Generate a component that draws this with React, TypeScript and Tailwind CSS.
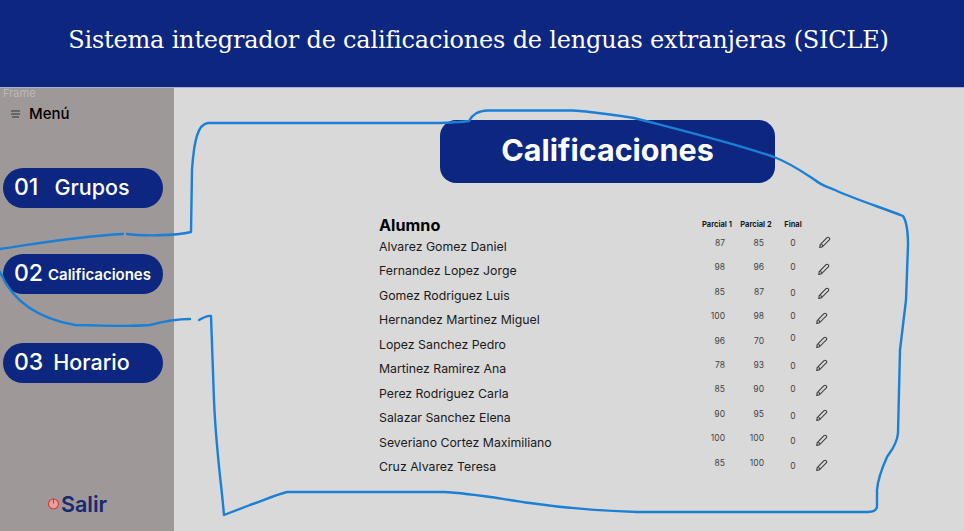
const rows = [
  { name: "Alvarez Gomez Daniel", p1: "87", p2: "85", fOff: 8, penX: 14, penOff: 10 },
  { name: "Fernandez Lopez Jorge", p1: "98", p2: "96", fOff: 8, penX: 13, penOff: 6 },
  { name: "Gomez Rodriguez Luis", p1: "85", p2: "87", fOff: 6, penX: 13, penOff: 6 },
  { name: "Hernandez Martinez Miguel", p1: "100", p2: "98", fOff: 8, penX: 11, penOff: 6 },
  { name: "Lopez Sanchez Pedro", p1: "96", p2: "70", fOff: 14, penX: 11, penOff: 6 },
  { name: "Martinez Ramirez Ana", p1: "78", p2: "93", fOff: 6, penX: 11, penOff: 8 },
  { name: "Perez Rodriguez Carla", p1: "85", p2: "90", fOff: 8, penX: 11, penOff: 8 },
  { name: "Salazar Sanchez Elena", p1: "90", p2: "95", fOff: 4, penX: 11, penOff: 6 },
  { name: "Severiano Cortez Maximiliano", p1: "100", p2: "100", fOff: 2, penX: 11, penOff: 6 },
  { name: "Cruz Alvarez Teresa", p1: "85", p2: "100", fOff: 2, penX: 11, penOff: 4 },
];

function Pen() {
  return (
    <svg width="12" height="12" viewBox="0 0 12 12" fill="none" stroke="#3d3d3d" strokeWidth="1.1">
      <path d="M1.2 8.6 8 1.6a1.4 1.4 0 0 1 2 0l.3.3a1.4 1.4 0 0 1 0 2L3.4 10.8l-2.6.7z" />
      <path d="M2.6 8.2l1.2 1.6" />
    </svg>
  );
}

function NavPill({ num, label, small, gap }: { num: string; label: string; small?: boolean; gap: string }) {
  return (
    <div className="ml-[3px] flex h-10 w-[160px] items-center rounded-[20px] bg-[#0d2680] pl-[11px] text-white">
      <span className="text-[23px] leading-none font-medium">{num}</span>
      <span className={small ? "ml-[5px] pt-[3px] text-[15px] font-semibold" : gap + " text-[21.5px] font-medium"}>{label}</span>
    </div>
  );
}

export default function App() {
  return (
    <div className="relative flex h-[531px] w-[964px] flex-col overflow-hidden bg-[#d9d9d9] font-['Inter',sans-serif]">
      <header className="flex h-[88px] shrink-0 items-start justify-center border-b border-[#aab2d8] bg-[#0d2680] pt-[22px] pr-[7px] font-['DejaVu_Serif',serif] text-[24px] text-white">
        <span className="tracking-[-0.2px]">Sistema integrador de calificaciones de lenguas extranjeras (SICLE)</span>
      </header>
      <div className="flex min-h-0 flex-1">
        <aside className="relative flex w-[174px] shrink-0 flex-col bg-[#9e9898]">
          <span className="absolute top-[-3px] left-[3px] text-[11px] text-[#bdb8b8]">Frame</span>
          <div className="mt-[15px] ml-[11px] flex items-center gap-[8px] text-black">
            <svg width="10" height="8" viewBox="0 0 10 8" stroke="#333" strokeWidth="1"><path d="M0 1h9M0 4h9M1 7h7" /></svg>
            <span className="text-[15px] font-medium">Menú</span>
          </div>
          <div className="mt-[42px] flex flex-col">
            <NavPill num="01" label="Grupos" gap="ml-[16px]" />
            <div className="h-[46px]" />
            <NavPill num="02" label="Calificaciones" small gap="" />
            <div className="h-[49px]" />
            <NavPill num="03" label="Horario" gap="ml-[10px]" />
          </div>
          <div className="mt-auto mb-[11px] ml-[47px] flex items-center text-[#18296f]">
            <svg width="13" height="13" viewBox="0 0 12 12" fill="#e8a09a" stroke="#d8362e" strokeWidth="1"><circle cx="6" cy="6.4" r="4.6" /><path d="M6 1v5" /></svg>
            <span className="ml-[1px] text-[21.5px] font-semibold">Salir</span>
          </div>
        </aside>
        <main className="flex flex-1 flex-col items-start">
          <div className="mt-[32px] ml-[266px] flex h-[63px] w-[335px] items-center justify-center rounded-[16px] bg-[#0d2680] pb-[3px] text-[30.5px] font-bold text-white">
            Calificaciones
          </div>
          <div className="mt-[32px] ml-[205px] w-[470px] text-[12.3px] text-[#1a1a1a]">
            <div className="flex h-[20px] items-center">
              <span className="w-[322px] text-[16.2px] font-bold text-black">Alumno</span>
              <span className="w-[32px] text-center text-[7.5px] font-bold whitespace-nowrap">Parcial 1</span>
              <span className="ml-[7px] w-[32px] text-center text-[7.5px] font-bold whitespace-nowrap">Parcial 2</span>
              <span className="ml-[9px] w-[24px] text-center text-[7.5px] font-bold">Final</span>
            </div>
            {rows.map((r) => (
              <div key={r.name} className="flex h-[24.45px] items-center">
                <span className="w-[322px]">{r.name}</span>
                <span className="mb-[8px] w-[24px] text-right text-[8.5px] text-[#444]">{r.p1}</span>
                <span className="mb-[8px] ml-[15px] w-[24px] text-right text-[8.5px] text-[#444]">{r.p2}</span>
                <span className="ml-[17px] w-[24px] text-center text-[8.5px] text-[#444]" style={{ marginBottom: r.fOff }}>0</span>
                <span style={{ marginLeft: r.penX, marginBottom: r.penOff }}><Pen /></span>
              </div>
            ))}
          </div>
        </main>
      </div>
      <svg className="pointer-events-none absolute top-0 left-0" width="964" height="531" fill="none" stroke="#1b7fd6" strokeWidth="2.4" strokeLinecap="round" strokeLinejoin="round">
        <path d="M0 249 C40 243 80 236 123 234" />
        <path d="M127 234 C140 236 175 236 191 232 L192 170 C194 140 198 124 208 123 L440 123 C455 122 465 122 469 121 C473 114 478 111 488 110.5 L573 110.5 C595 112 615 115 634 118 C680 130 730 142 774 157 C790 163 803 172 815 180 C822 186 828 187 835 190 C857 200 880 207 903 216 C907 222 908 230 908 245 L906 300 L900 350 L898 433 C897 445 890 452 887 457 C882 468 878 478 877 490 L877 507 C876 511 873 512 868 512 L637 512 C600 511 565 508 530 503 C495 498 470 493 443 492 L287 492 C275 495 262 501 250 505 L224 515 C221 480 216 450 214 400 L211 316 C207 315 203 318 199 320" />
        <path d="M0 272 C12 300 35 318 75 325 C110 326 140 326 150 325 C165 321 178 319 190 319" />
      </svg>
    </div>
  );
}
